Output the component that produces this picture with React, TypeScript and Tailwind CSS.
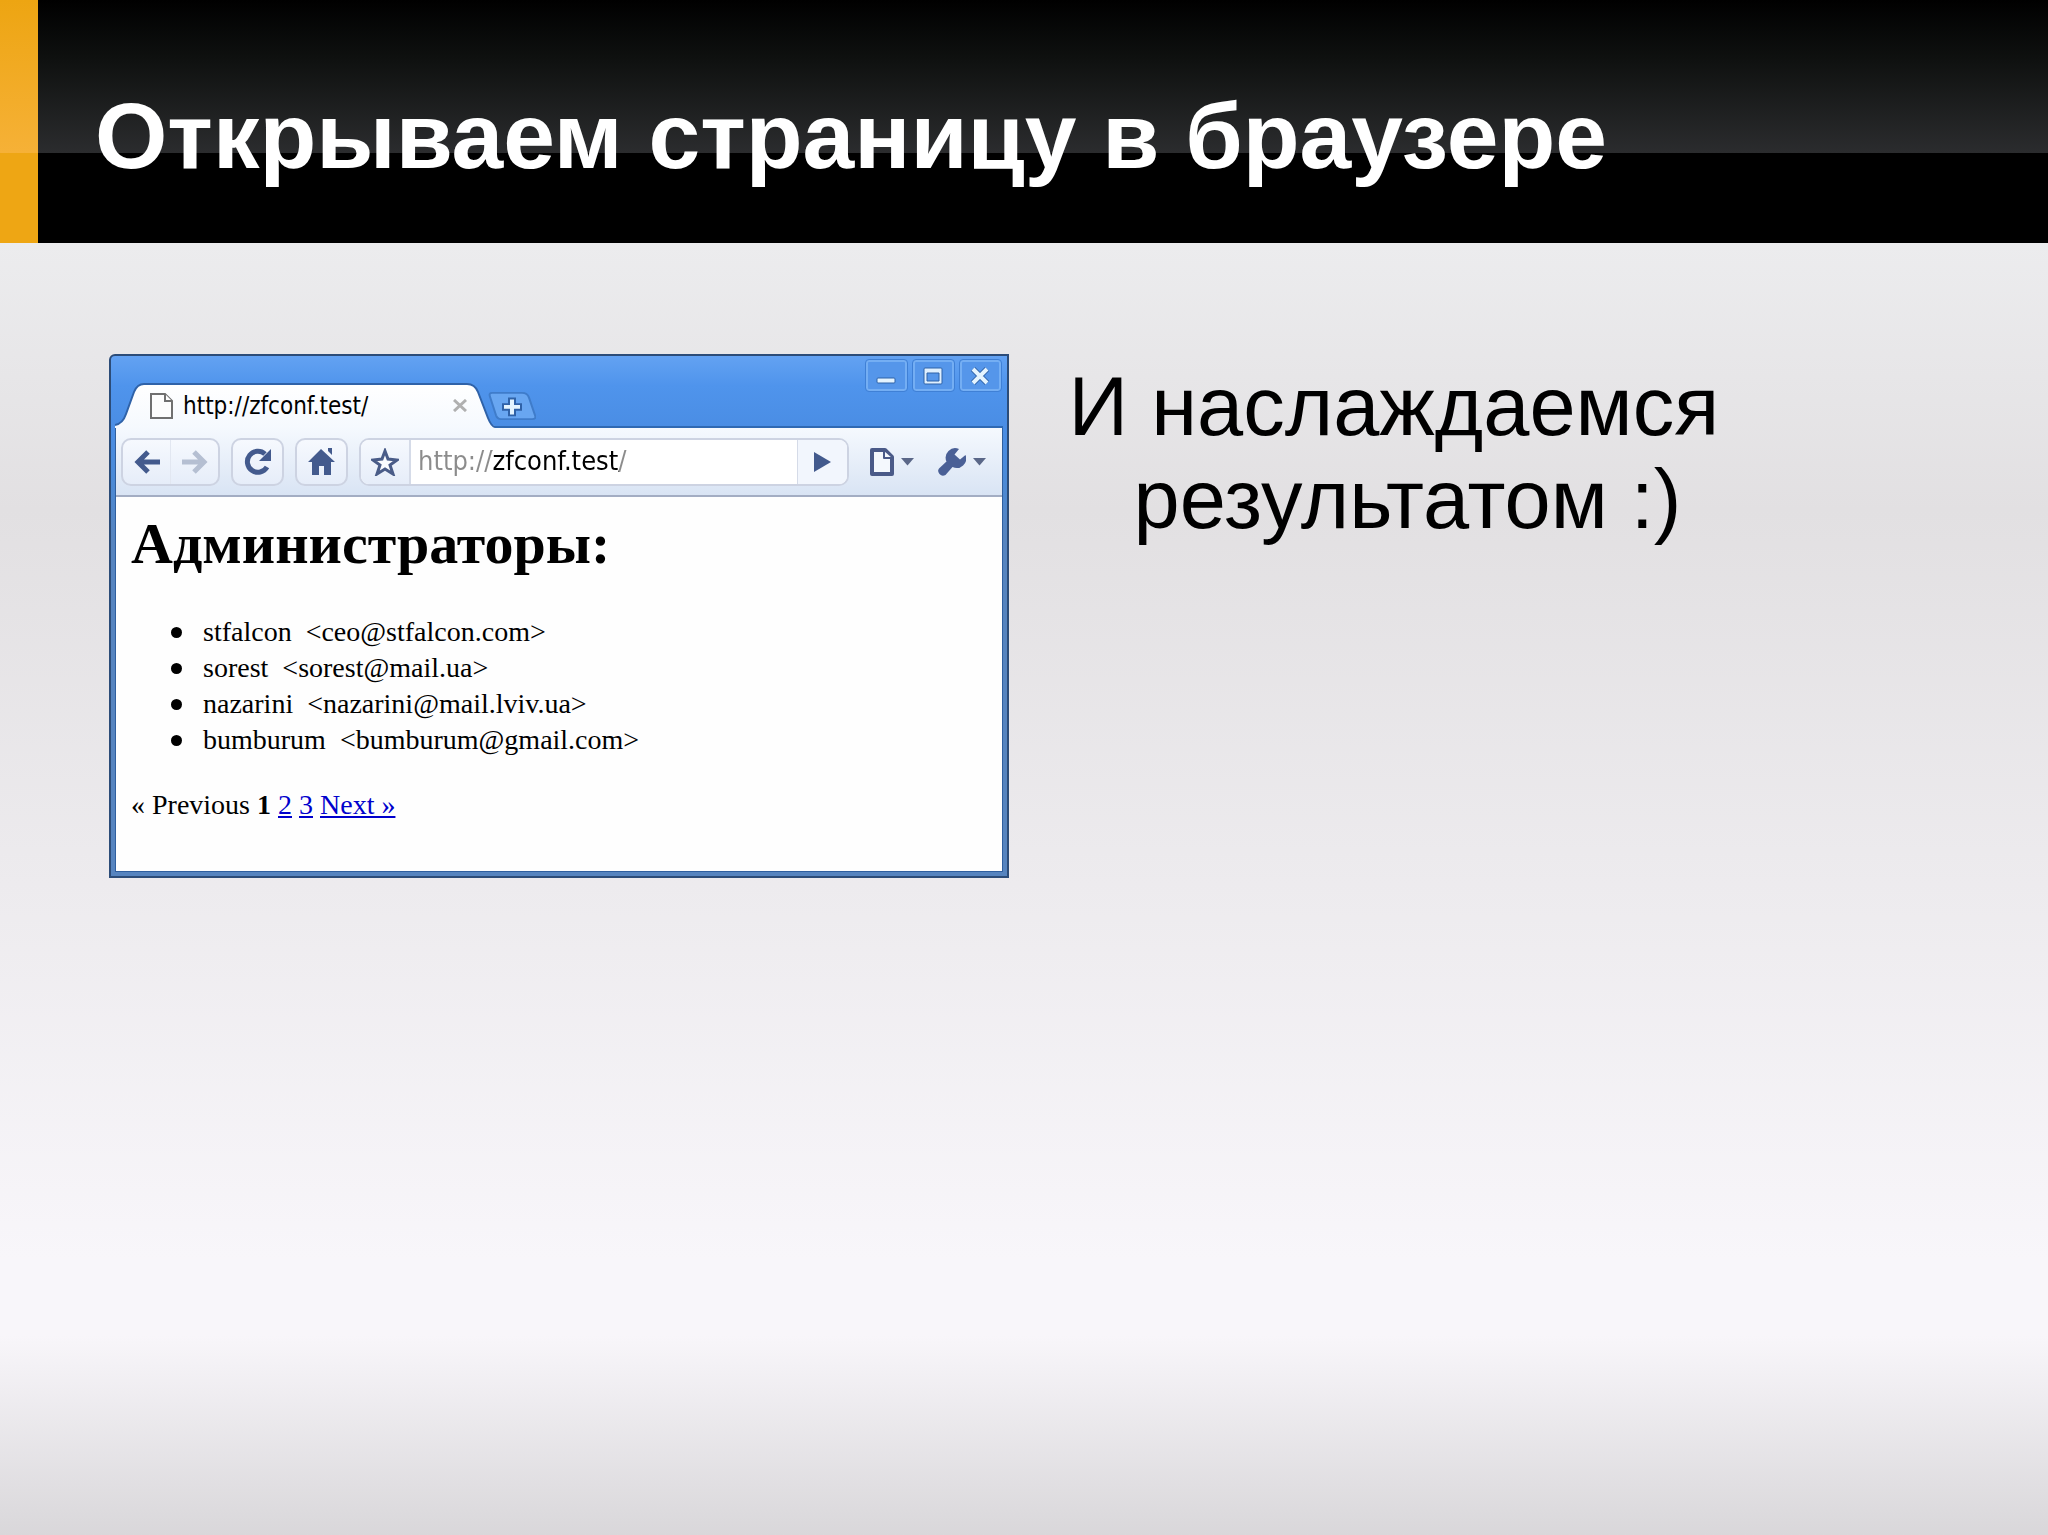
import { useState } from "react";

type Admin = {
  name: string;
  email: string;
};

const admins: Admin[] = [
  { name: "stfalcon", email: "ceo@stfalcon.com" },
  { name: "sorest", email: "sorest@mail.ua" },
  { name: "nazarini", email: "nazarini@mail.lviv.ua" },
  { name: "bumburum", email: "bumburum@gmail.com" },
];

const toolButton =
  "flex h-12 items-center justify-center rounded-[10px] border-2 border-[#cdd3e2] bg-gradient-to-b from-[#f6f9fe] to-[#e6edf9]";

const windowButton =
  "flex h-[31px] w-[41px] items-center justify-center rounded-[3px] border-2 border-[#74aef3] bg-[#5596ea] outline outline-[#3f80d6]";

function Caret() {
  return (
    <svg className="h-2 w-[13px]" viewBox="0 0 13 8" fill="#5a6788">
      <path d="M0 0h13L6.5 7.5z" />
    </svg>
  );
}

function TitleBar() {
  return (
    <div className="flex h-[72px] items-end shadow-[inset_0_-2px_0_#2f69b3]">
      {/* Active tab */}
      <div className="relative flex h-[45px] w-[380px] shrink-0 items-center pl-[35px]">
        <svg className="absolute inset-0 h-full w-full" viewBox="0 0 380 45" preserveAspectRatio="none">
          <defs>
            <linearGradient id="tab" x1="0" y1="0" x2="0" y2="1">
              <stop offset="0" stopColor="#ffffff" />
              <stop offset="1" stopColor="#f5f9fe" />
            </linearGradient>
          </defs>
          <path
            d="M0 45V42C6 41 9 37 11 31L19 9C21 4 24 1 29 1H352C358 1 361 4 363 9L373 35C375 40 377 43 380 43V45Z"
            fill="url(#tab)"
          />
          <path
            d="M0 42C6 41 9 37 11 31L19 9C21 4 24 1 29 1H352C358 1 361 4 363 9L373 35C375 40 377 44 380 44"
            fill="none"
            stroke="#2f62a8"
            strokeWidth="2"
          />
        </svg>
        <svg className="relative h-[26px] w-[23px]" viewBox="0 0 23 26" fill="#fdfdfd" stroke="#707070" strokeWidth="2">
          <path d="M1 1h14l7 7v17H1z" />
          <path d="M15 1v7h7" />
        </svg>
        <span className="relative ml-[10px] font-['DejaVu_Sans_Condensed','DejaVu_Sans',sans-serif] text-[24px] leading-7 font-stretch-condensed text-black">
          http://zfconf.test/
        </span>
        <button aria-label="Close tab" className="relative mr-[28px] ml-auto">
          <svg className="h-[13px] w-[14px]" viewBox="0 0 14 13" stroke="#b0b0b0" strokeWidth="3">
            <path d="M1 1l12 11M13 1L1 12" />
          </svg>
        </button>
      </div>
      <button aria-label="New tab" className="-ml-[7px] mb-2">
        <svg className="h-[28px] w-12" viewBox="0 0 48 30" preserveAspectRatio="none">
          <path
            d="M4 1H34C38 1 40 3 41 6L47 25C48 28 47 29 44 29H13C10 29 9 28 8 25L2 5C1 2 2 1 4 1Z"
            fill="#68a6f1"
            stroke="#3f7cca"
            strokeWidth="2"
          />
          <path
            d="M21 7h6v6h6v6h-6v6h-6v-6h-6v-6h6z"
            fill="#e4f4ff"
            stroke="#2f62a8"
            strokeWidth="2"
          />
        </svg>
      </button>
      {/* Window controls */}
      <div className="mt-1 mr-[2px] ml-auto flex gap-[6px] self-start">
        <button aria-label="Minimize" className={windowButton}>
          <svg className="h-[22px] w-6" viewBox="0 0 24 22">
            <rect x="3" y="13" width="18" height="5" rx="1" fill="#e4f4ff" stroke="#2f62a8" />
          </svg>
        </button>
        <button aria-label="Maximize" className={windowButton}>
          <svg className="h-[22px] w-6" viewBox="0 0 24 22">
            <path
              d="M4 3h16q1 0 1 1v14q0 1-1 1H4q-1 0-1-1V4q0-1 1-1zM6 8v8h12V8z"
              fill="#dff0ff"
              fillRule="evenodd"
              stroke="#2f62a8"
            />
          </svg>
        </button>
        <button aria-label="Close" className={windowButton}>
          <svg className="h-[22px] w-6" viewBox="0 0 24 22" fill="none">
            <path d="M5 4l14 14M19 4L5 18" stroke="#2f62a8" strokeWidth="6" />
            <path d="M5 4l14 14M19 4L5 18" stroke="#e4f4ff" strokeWidth="4" />
          </svg>
        </button>
      </div>
    </div>
  );
}

function Toolbar() {
  const [url, setUrl] = useState("http://zfconf.test/");

  return (
    <div className="flex h-[69px] items-center gap-[11px] border-b-2 border-[#a3adc3] bg-gradient-to-b from-[#f5f9fe] to-[#d9e4f4] pl-[5px]">
      <div className={`${toolButton} w-[99px]`}>
        <button aria-label="Back" className="flex h-full flex-1 items-center justify-center">
          <svg className="h-6 w-[26px]" viewBox="0 0 26 24" fill="none" stroke="#435a8d" strokeWidth="5">
            <path d="M3 12h23M14 2L4 12l10 10" />
          </svg>
        </button>
        <button
          aria-label="Forward"
          className="flex h-full flex-1 items-center justify-center border-l border-[#e2e7f1]"
        >
          <svg className="h-6 w-[26px]" viewBox="0 0 26 24" fill="none" stroke="#b5bfd2" strokeWidth="5">
            <path d="M0 12h23M12 2l10 10-10 10" />
          </svg>
        </button>
      </div>
      <button aria-label="Reload" className={`${toolButton} w-[53px]`}>
        <svg className="h-7 w-7" viewBox="0 0 28 28" fill="none">
          <path d="M21 6A10.500 10.500 0 1 0 23 19" stroke="#435a8d" strokeWidth="5" />
          <path d="M27 1v12H15z" fill="#435a8d" />
        </svg>
      </button>
      <button aria-label="Home" className={`${toolButton} w-[53px]`}>
        <svg className="h-7 w-7" viewBox="0 0 28 28" fill="#435a8d">
          <path d="M13 1L0 14h4v13h7v-9h5v9h7V14h4z" />
          <path d="M20 0h4v7l-4-4z" />
        </svg>
      </button>
      <div className="flex h-12 min-w-0 flex-1 items-stretch overflow-hidden rounded-[10px] border-2 border-[#cdd3e2] bg-white">
        <button
          aria-label="Bookmark this page"
          className="flex w-[50px] shrink-0 items-center justify-center border-r-2 border-[#d5dbe8] bg-gradient-to-b from-[#f6f9fe] to-[#e6edf9]"
        >
          <svg className="h-7 w-7" viewBox="0 0 28 28" fill="#fafcff" stroke="#4a5c88" strokeWidth="3">
            <path d="M14 3l3 8 9 1-7 5 3 9-8-5-8 5 3-9-7-5 9-1z" />
          </svg>
        </button>
        {/* Host part is black, scheme and trailing slash are gray */}
        <input
          type="text"
          aria-label="Address"
          value={url}
          onChange={(e) => setUrl(e.target.value)}
          className="min-w-0 flex-1 bg-[linear-gradient(to_right,#8c8c8c_81px,#000_81px,#000_208px,#8c8c8c_208px)] bg-clip-text pl-[7px] font-['DejaVu_Sans_Condensed','DejaVu_Sans',sans-serif] text-[27px] font-stretch-condensed text-transparent caret-black outline-none"
        />
        <button
          aria-label="Go"
          className="flex w-[50px] shrink-0 items-center justify-center border-l border-[#d5dbe8] bg-[#f2f6fd]"
        >
          <svg className="h-5 w-[18px]" viewBox="0 0 18 20" fill="#435a8d">
            <path d="M1 0l17 10L1 20z" />
          </svg>
        </button>
      </div>
      <div className="mr-4 ml-[10px] flex items-center gap-6">
        <button aria-label="Page menu" className="flex items-center gap-[7px]">
          <svg className="h-7 w-6" viewBox="0 0 24 28" fill="#f4f8fd" stroke="#4a5a88" strokeLinejoin="round">
            <path d="M2 2h13l7 7v17H2z" strokeWidth="4" />
            <path d="M14 3v7h8" strokeWidth="2" />
          </svg>
          <Caret />
        </button>
        <button aria-label="Tools menu" className="flex items-center gap-[7px]">
          <svg className="h-7 w-7" viewBox="0 0 28 28">
            <path
              d="M21 1A9.500 9.500 0 0 0 8.500 13.500L1 20.500Q-1 23 1.500 26T7.500 27L14.500 19A9.500 9.500 0 0 0 27.500 7L22 11.500L16.500 6.500Z"
              fill="#4a6096"
            />
          </svg>
          <Caret />
        </button>
      </div>
    </div>
  );
}

function BrowserWindow() {
  return (
    <section className="rounded-tl-[6px] border-2 border-[#2c4c78] bg-[linear-gradient(#63a2f2,#4f94ec_30px,#4a8de4_72px,#4a8ad8_120px,#5684bf_180px)]">
      <div className="px-1 pb-1">
        <TitleBar />
        <div className="border border-t-0 border-[#2f5f9f]">
          <Toolbar />
          <div className="bg-[#fefefe] pt-[14px] pb-12 pl-[15px] font-['Liberation_Serif',serif] text-[28px] leading-9 text-black">
            <h2 className="text-[58px] leading-[66px] font-bold">Администраторы:</h2>
            <ul className="mt-[37px] pl-10">
              {admins.map((admin) => (
                <li
                  key={admin.email}
                  className="flex items-center before:mr-[21px] before:size-[11px] before:rounded-full before:bg-black"
                >
                  {admin.name}&nbsp; &lt;{admin.email}&gt;
                </li>
              ))}
            </ul>
            <nav className="mt-[29px]">
              « Previous <b>1</b>{" "}
              <a href="#2" className="text-[#0000cc] underline">2</a>{" "}
              <a href="#3" className="text-[#0000cc] underline">3</a>{" "}
              <a href="#next" className="text-[#0000cc] underline">Next »</a>
            </nav>
          </div>
        </div>
      </div>
    </section>
  );
}

export default function App() {
  return (
    <div className="flex min-h-screen flex-col bg-[linear-gradient(#ececee_243px,#e2e0e2_510px,#f8f6fa_82%,#f8f6fa_87%,#d9d7da)] font-['Liberation_Sans',Arial,sans-serif]">
      <header className="flex h-[243px] items-stretch bg-[linear-gradient(#000,#0f1110_60px,#2b2c2e_153px,#000_153px)]">
        <div className="w-[38px] shrink-0 bg-[linear-gradient(#eda512,#f6b137_153px,#eea614_153px)]" />
        <h1 className="flex items-center pt-[29px] pl-[57px] text-[93px] leading-none font-bold text-white">
          Открываем страницу в браузере
        </h1>
      </header>
      <main className="grid grid-cols-[900fr_920fr] items-start gap-[60px] pt-[111px] pr-[60px] pl-[109px]">
        <BrowserWindow />
        <p className="pt-[6px] pl-[65px] -indent-[65px] text-[83px] leading-[93px] text-black">
          И наслаждаемся результатом :)
        </p>
      </main>
    </div>
  );
}
